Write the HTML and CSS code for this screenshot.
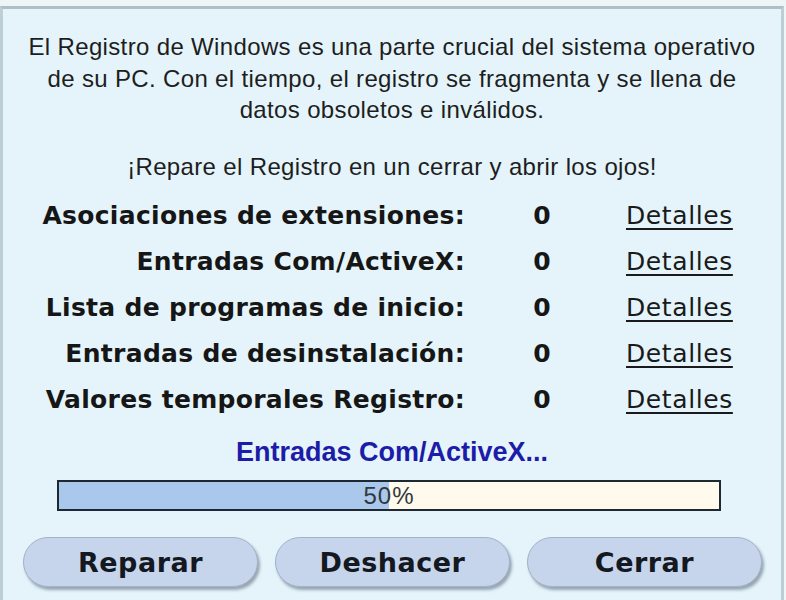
FILE: index.html
```html
<!DOCTYPE html>
<html lang="es">
<head>
<meta charset="utf-8">
<title>Reparar Registro</title>
<link rel="stylesheet" href="styles.css">
</head>
<body>
<div class="topstrip"></div>
<main class="panel">
  <p class="intro">El Registro de Windows es una parte crucial del sistema operativo de su PC. Con el tiempo, el registro se fragmenta y se llena de datos obsoletos e inválidos.</p>
  <p class="tagline">¡Repare el Registro en un cerrar y abrir los ojos!</p>
  <div class="stats">
    <span class="label">Asociaciones de extensiones:</span><span class="count">0</span><a class="details" href="#">Detalles</a>
    <span class="label">Entradas Com/ActiveX:</span><span class="count">0</span><a class="details" href="#">Detalles</a>
    <span class="label">Lista de programas de inicio:</span><span class="count">0</span><a class="details" href="#">Detalles</a>
    <span class="label">Entradas de desinstalación:</span><span class="count">0</span><a class="details" href="#">Detalles</a>
    <span class="label">Valores temporales Registro:</span><span class="count">0</span><a class="details" href="#">Detalles</a>
  </div>
  <div class="status">Entradas Com/ActiveX...</div>
  <div class="progress">
    <div class="progress-fill" style="width:50%"></div>
    <span class="progress-text">50%</span>
  </div>
  <div class="actions">
    <button class="btn">Reparar</button>
    <button class="btn">Deshacer</button>
    <button class="btn">Cerrar</button>
  </div>
</main>
</body>
</html>
```
FILE: styles.css
```css
html, body {
  margin: 0;
  padding: 0;
}

body {
  background: #eef6f8;
  width: 786px;
  height: 600px;
  overflow: hidden;
  font-family: "Liberation Sans", Arial, sans-serif;
  color: #1e1e1e;
}

.topstrip {
  height: 6px;
  background: #eef5f7;
}

.panel {
  background: #e4f4fa;
  border-top: 3px solid #aebfc6;
  border-left: 3px solid #bccfd6;
  border-right: 3px solid #bccfd6;
  margin-right: 2px;
  height: 600px;
  box-sizing: border-box;
  text-align: center;
  padding-top: 22px;
}

.intro,
.tagline {
  margin: 0 auto;
  max-width: 745px;
  font-size: 24px;
  line-height: 31.5px;
  letter-spacing: 0.35px;
}

.tagline {
  margin-top: 25px;
}

.stats {
  display: grid;
  grid-template-columns: 462px 154px 1fr;
  grid-auto-rows: 46px;
  align-items: center;
  margin-top: 10px;
  font-family: "DejaVu Sans", Verdana, sans-serif;
  font-weight: bold;
  font-size: 25px;
  letter-spacing: 0.3px;
  color: #161616;
}

.label {
  text-align: right;
}

.count {
  text-align: center;
  letter-spacing: 0;
}

.details {
  text-align: left;
  padding-left: 7px;
  font-weight: normal;
  letter-spacing: 0.6px;
  color: #1a1a1a;
  text-decoration: underline;
  text-underline-offset: 4px;
  text-decoration-thickness: 2px;
}

.status {
  margin-top: 12px;
  height: 36px;
  line-height: 36px;
  font-size: 27px;
  font-weight: bold;
  color: #1c1ca8;
}

.progress {
  position: relative;
  margin: 10px 0 0 54px;
  width: 660px;
  height: 27px;
  border: 2px solid #1d2832;
  background: #fffaec;
  display: flex;
  align-items: center;
  justify-content: center;
}

.progress-fill {
  position: absolute;
  left: 0;
  top: 0;
  bottom: 0;
  background: #a9c8ec;
}

.progress-text {
  position: relative;
  font-size: 24px;
  color: #303840;
  letter-spacing: 1px;
}

.actions {
  display: flex;
  gap: 17px;
  margin: 26px 0 0 20px;
}

.btn {
  width: 235px;
  height: 50px;
  border-radius: 25px;
  border: 1px solid #a4b2c8;
  background: #c6d5ec;
  box-shadow: 2px 3px 3px rgba(90, 100, 120, 0.55);
  font-family: "DejaVu Sans", Verdana, sans-serif;
  font-weight: bold;
  font-size: 27px;
  color: #141820;
  letter-spacing: 0.5px;
  padding: 0;
}
```
